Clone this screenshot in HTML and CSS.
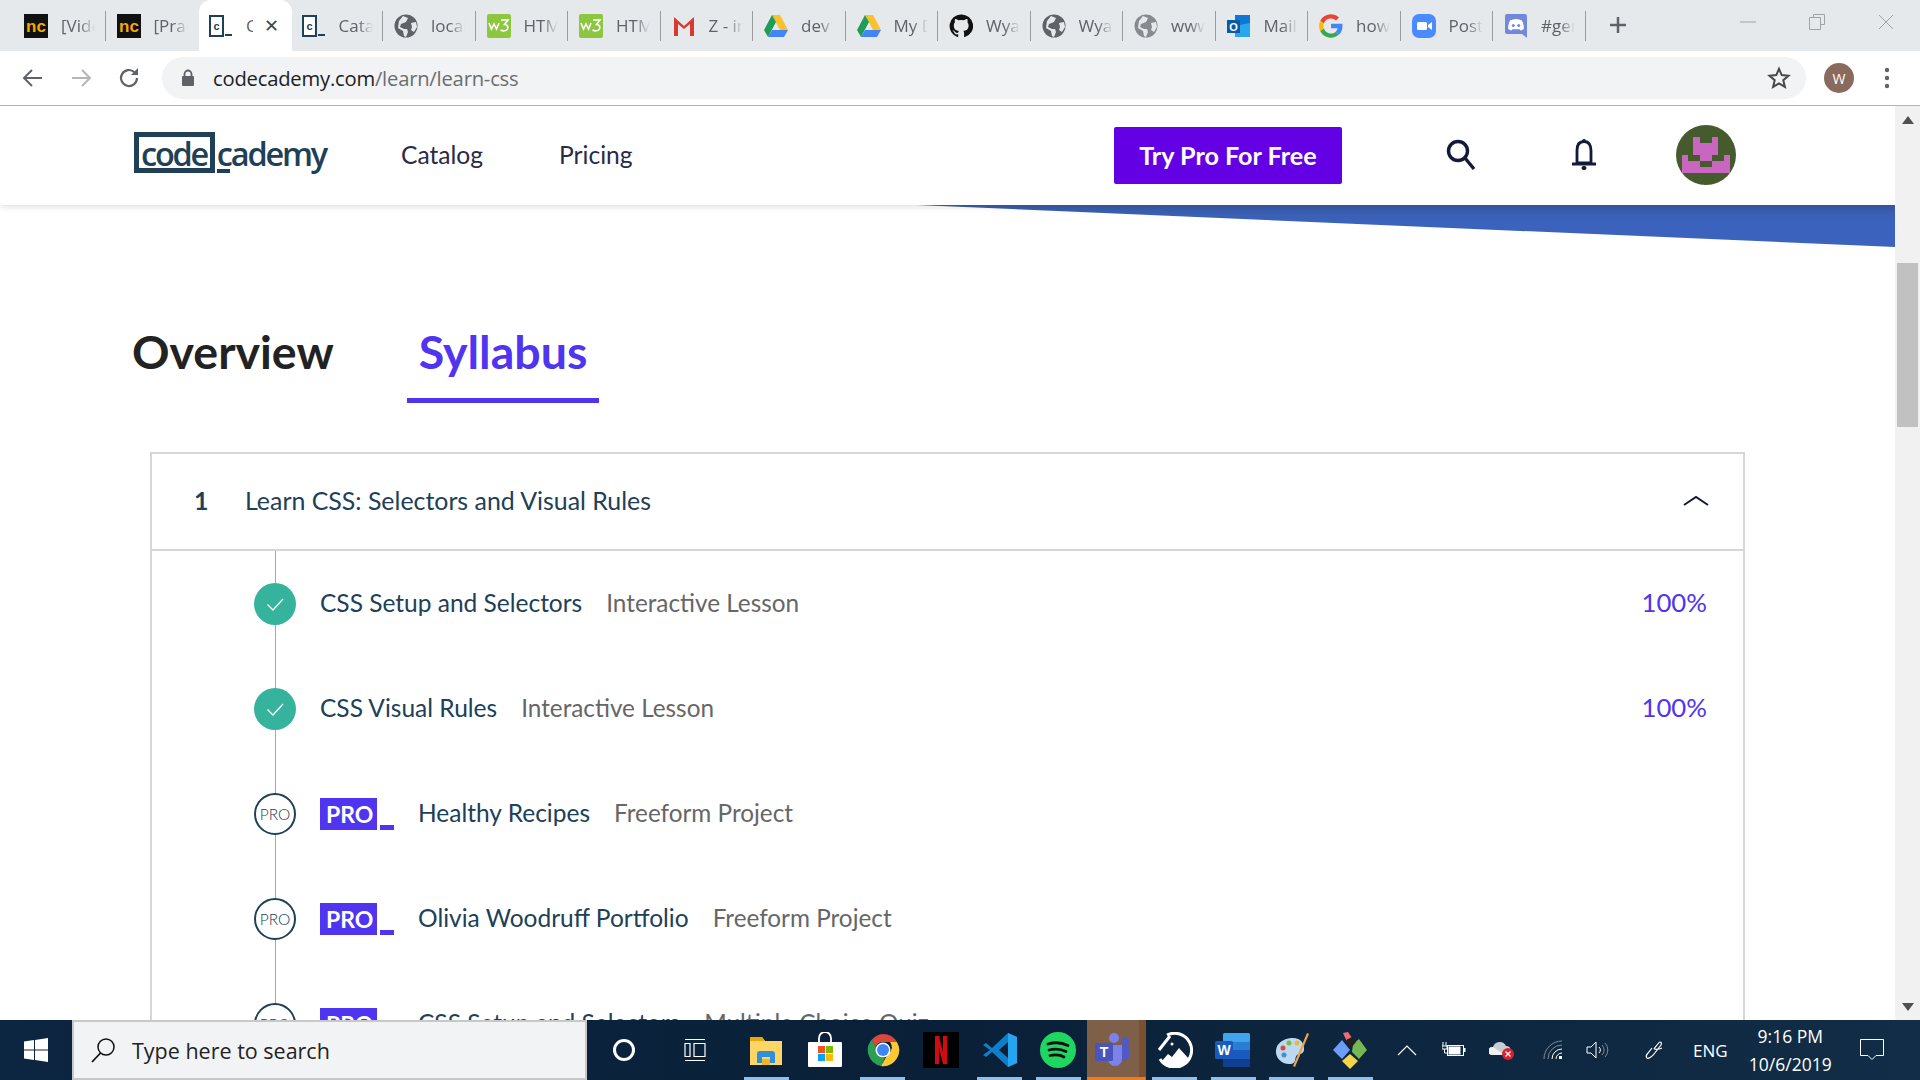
FILE: index.html

```html
<!DOCTYPE html>
<html lang="en">
<head>
  <meta charset="UTF-8">
  <title>Learn CSS | Codecademy</title>
  <link rel="stylesheet" href="styles.css">
</head>
<body>

  <svg class="defs" width="0" height="0">
    <symbol id="fav-nc" viewBox="0 0 24 24">
      <rect width="24" height="24" fill="#111"/>
      <text x="12" y="17.500" text-anchor="middle" font-family="Liberation Sans, sans-serif" font-weight="700" font-size="17" fill="#f5a800">nc</text>
    </symbol>
    <symbol id="fav-cc" viewBox="0 0 24 24">
      <rect x="1" y="2" width="13" height="20" fill="#fff" stroke="#204057" stroke-width="2"/>
      <text x="7.500" y="16" text-anchor="middle" font-family="Liberation Sans, sans-serif" font-weight="700" font-size="11" fill="#204057">c</text>
      <rect x="16" y="20" width="7" height="2" fill="#204057"/>
    </symbol>
    <symbol id="fav-globe" viewBox="0 0 24 24">
      <circle cx="12" cy="12" r="11.500" fill="#5f6368"/>
      <path d="M9 2l5 2-2 4-5 2-1 3 4 2 3 0 1 3-2 5-2-1-1-5-5-3 1-7zM17 9l5-1 1 5-3 5-3-2 1-3z" fill="#e6e9ec"/>
    </symbol>
    <symbol id="fav-w3" viewBox="0 0 24 24">
      <rect width="24" height="24" rx="2" fill="#8dc63f"/>
      <path d="M2 9l2.500 6 2.500-5 2.500 5 2.500-6M14 6h7l-3.500 4.500c3 0 4 2.500 3 4.500s-4.500 2.500-7 1" fill="none" stroke="#fff" stroke-width="1.600"/>
    </symbol>
    <symbol id="fav-gmail" viewBox="0 0 24 24">
      <path d="M2 3l10 9 10-9v19h-4V10l-6 5-6-5v12H2z" fill="#d93a2f"/>
    </symbol>
    <symbol id="fav-drive" viewBox="0 0 24 24">
      <path d="M8 1h8l8 15h-8z" fill="#fbc02d"/>
      <path d="M8 1L0 16l4 7 8-15z" fill="#1f9d55"/>
      <path d="M4 23h16l4-7H8z" fill="#4285f4"/>
    </symbol>
    <symbol id="fav-github" viewBox="0 0 24 24">
      <path d="M12 .5a11.500 11.500 0 0 0-3.600 22.400c.6.100.8-.2.800-.6v-2c-3.200.7-3.900-1.500-3.900-1.500-.5-1.300-1.300-1.700-1.300-1.700-1-.7.100-.7.100-.7 1.200.1 1.800 1.200 1.800 1.200 1 1.800 2.700 1.300 3.300 1 .1-.8.400-1.300.8-1.600-2.600-.3-5.200-1.300-5.200-5.700 0-1.300.4-2.300 1.200-3.100-.1-.3-.5-1.500.1-3.100 0 0 1-.3 3.200 1.200a11 11 0 0 1 5.800 0c2.200-1.500 3.200-1.200 3.200-1.200.6 1.600.2 2.800.1 3.100.8.800 1.200 1.900 1.200 3.100 0 4.400-2.700 5.400-5.300 5.700.4.400.8 1.100.8 2.200v3.200c0 .3.200.7.800.6A11.500 11.500 0 0 0 12 .5z" fill="#111"/>
    </symbol>
    <symbol id="fav-outlook" viewBox="0 0 24 24">
      <rect x="8" y="1" width="15" height="22" fill="#0f78d4"/>
      <path d="M8 12l15-3v14H8z" fill="#28a8ea"/>
      <rect x="0" y="6" width="13" height="13" fill="#0a5aa8"/>
      <text x="6.500" y="16.500" text-anchor="middle" font-family="Liberation Sans, sans-serif" font-weight="700" font-size="11" fill="#fff">O</text>
    </symbol>
    <symbol id="fav-google" viewBox="0 0 24 24">
      <path d="M12 4.500a7.500 7.500 0 0 1 5 1.900l3-3A12 12 0 0 0 1.300 6.700l3.500 2.700A7.500 7.500 0 0 1 12 4.500z" fill="#ea4335"/>
      <path d="M1.300 6.700a12 12 0 0 0 0 10.600l3.500-2.700a7.500 7.500 0 0 1 0-5.200z" fill="#fbbc05"/>
      <path d="M1.300 17.300A12 12 0 0 0 20 20.600l-3.400-2.700A7.500 7.500 0 0 1 4.800 14.600z" fill="#34a853"/>
      <path d="M23.500 12c0-.8-.1-1.500-.2-2.200H12v4.500h6.500a5.600 5.600 0 0 1-1.900 3.600l3.400 2.700c2.200-2 3.500-5 3.500-8.600z" fill="#4285f4"/>
    </symbol>
    <symbol id="fav-zoom" viewBox="0 0 24 24">
      <rect width="24" height="24" rx="7" fill="#4a8cff"/>
      <rect x="5" y="8" width="10" height="8" rx="1.500" fill="#fff"/>
      <path d="M16 11l4-3v8l-4-3z" fill="#fff"/>
    </symbol>
    <symbol id="fav-discord" viewBox="0 0 24 24">
      <path d="M3 0h18a2 2 0 0 1 2 2v22l-5-4H3a2 2 0 0 1-2-2V2a2 2 0 0 1 2-2z" fill="#7289da"/>
      <path d="M6 6.500c4-2 8-2 12 0 1.500 3 2 6 1.800 8.500-1 .7-2 1.200-3.300 1.500l-.8-1.300H8.300l-.8 1.300C6.200 16.200 5.200 15.700 4.200 15c-.2-2.500.3-5.500 1.800-8.500z" fill="#fff"/>
      <circle cx="9.300" cy="11.500" r="1.500" fill="#7289da"/>
      <circle cx="14.700" cy="11.500" r="1.500" fill="#7289da"/>
    </symbol>
    <symbol id="i-check" viewBox="0 0 42 42">
      <path d="M13.500 21.500l5.500 5.500 10-11" fill="none" stroke="#fff" stroke-width="1.300"/>
    </symbol>
  </svg>

  <div class="tabstrip">
    <div class="tab"><svg class="fav"><use href="#fav-nc"/></svg><span class="tab-title">[Video] How</span></div>
    <div class="tab"><svg class="fav"><use href="#fav-nc"/></svg><span class="tab-title">[Practice] Le</span></div>
    <div class="tab active"><svg class="fav"><use href="#fav-cc"/></svg><span class="tab-title">Codecademy</span><span class="tab-close">&#10005;</span></div>
    <div class="tab"><svg class="fav"><use href="#fav-cc"/></svg><span class="tab-title">Catalog</span></div>
    <div class="tab"><svg class="fav"><use href="#fav-globe"/></svg><span class="tab-title">localhost</span></div>
    <div class="tab"><svg class="fav"><use href="#fav-w3"/></svg><span class="tab-title">HTML</span></div>
    <div class="tab"><svg class="fav"><use href="#fav-w3"/></svg><span class="tab-title">HTML</span></div>
    <div class="tab"><svg class="fav"><use href="#fav-gmail"/></svg><span class="tab-title">Z - inbox</span></div>
    <div class="tab"><svg class="fav"><use href="#fav-drive"/></svg><span class="tab-title">dev</span></div>
    <div class="tab"><svg class="fav"><use href="#fav-drive"/></svg><span class="tab-title">My Drive</span></div>
    <div class="tab"><svg class="fav"><use href="#fav-github"/></svg><span class="tab-title">Wyatt</span></div>
    <div class="tab"><svg class="fav"><use href="#fav-globe"/></svg><span class="tab-title">Wyatt</span></div>
    <div class="tab"><svg class="fav dim"><use href="#fav-globe"/></svg><span class="tab-title">www.</span></div>
    <div class="tab"><svg class="fav"><use href="#fav-outlook"/></svg><span class="tab-title">Mail</span></div>
    <div class="tab"><svg class="fav"><use href="#fav-google"/></svg><span class="tab-title">how to</span></div>
    <div class="tab"><svg class="fav"><use href="#fav-zoom"/></svg><span class="tab-title">Post</span></div>
    <div class="tab"><svg class="fav"><use href="#fav-discord"/></svg><span class="tab-title">#general</span></div>
    <svg class="newtab" width="18" height="18" viewBox="0 0 18 18"><path d="M9 1v16M1 9h16" stroke="#5f6368" stroke-width="2.500"/></svg>
    <div class="winctl">
      <svg width="16" height="16" viewBox="0 0 16 16"><path d="M0 8h16" stroke="#a0a3a6"/></svg>
      <svg width="16" height="16" viewBox="0 0 16 16"><path d="M4.500 3V.5h11v10H12M.5 3.500h11v12H.5z" fill="none" stroke="#a0a3a6"/></svg>
      <svg width="16" height="16" viewBox="0 0 16 16"><path d="M1 1l14 14M15 1L1 15" stroke="#a0a3a6"/></svg>
    </div>
  </div>

  <div class="toolbar">
    <svg class="tool" width="24" height="24" viewBox="0 0 24 24"><path d="M21 12H4M11 4l-8 8 8 8" fill="none" stroke="#5f6368" stroke-width="2"/></svg>
    <svg class="tool" width="24" height="24" viewBox="0 0 24 24"><path d="M3 12h17M13 4l8 8-8 8" fill="none" stroke="#b4b6b8" stroke-width="2"/></svg>
    <svg class="tool" width="24" height="24" viewBox="0 0 24 24"><path d="M20 12a8 8 0 1 1-2.500-5.800" fill="none" stroke="#5f6368" stroke-width="2.200"/><path d="M21 2v7h-7z" fill="#5f6368"/></svg>
    <div class="omnibox">
      <svg class="lock" width="14" height="18" viewBox="0 0 14 18"><path d="M3.500 8V5a3.500 3.500 0 0 1 7 0v3" fill="none" stroke="#5f6368" stroke-width="1.800"/><rect x="1" y="7" width="12" height="10" rx="1" fill="#5f6368"/></svg>
      <span class="url"><span class="url-host">codecademy.com</span>/learn/learn-css</span>
      <svg class="star" width="24" height="24" viewBox="0 0 24 24"><path d="M12 2.800l2.700 6.300 6.800.6-5.200 4.500 1.600 6.700L12 17.300l-5.900 3.600 1.600-6.700-5.200-4.500 6.800-.6z" fill="none" stroke="#46494c" stroke-width="2"/></svg>
    </div>
    <div class="profile">W</div>
    <svg class="menu" width="6" height="22" viewBox="0 0 6 22"><circle cx="3" cy="3" r="2.200" fill="#5f6368"/><circle cx="3" cy="11" r="2.200" fill="#5f6368"/><circle cx="3" cy="19" r="2.200" fill="#5f6368"/></svg>
  </div>

  <div class="viewport">
    <div class="page">
      <header class="sitenav">
        <div class="logo"><span class="logo-box">code</span><span class="logo-rest">cademy</span></div>
        <a class="navlink catalog">Catalog</a>
        <a class="navlink pricing">Pricing</a>
        <a class="trypro">Try Pro For Free</a>
        <svg class="nav-search" width="32" height="32" viewBox="0 0 32 32"><circle cx="13" cy="12" r="9.500" fill="none" stroke="#14193a" stroke-width="3.400"/><path d="M20 19l9 11" stroke="#14193a" stroke-width="3.400"/></svg>
        <svg class="nav-bell" width="26" height="32" viewBox="0 0 26 32"><path d="M13 2.500c-5 0-7 4-7 9V24h14V11.500c0-5-2-9-7-9z" fill="none" stroke="#14193a" stroke-width="2.800"/><path d="M1 25h24" stroke="#14193a" stroke-width="3"/><rect x="11" y="0" width="4" height="4" rx="2" fill="#14193a"/><rect x="10.500" y="27" width="5" height="4" rx="2" fill="#14193a"/></svg>
        <svg class="avatar" width="60" height="60" viewBox="0 0 60 60">
          <circle cx="30" cy="30" r="30" fill="#455a2d"/>
          <path d="M17 12h7v6h12v-6h6v18H17zM6 30h6v6h12v-6h12v6h12v-6h6v18H6zM24 36v6h12v-6z" fill="#c966c0" fill-rule="evenodd"/>
        </svg>
      </header>

      <div class="wedge"></div>

      <div class="pagetabs">
        <div class="pagetab">Overview</div>
        <div class="pagetab current">Syllabus</div>
      </div>

      <section class="module">
        <div class="module-head">
          <span class="module-num">1</span>
          <span class="module-title">Learn CSS: Selectors and Visual Rules</span>
          <svg class="chevron" width="26" height="12" viewBox="0 0 26 12"><path d="M1 10l12-8 12 8" fill="none" stroke="#14193a" stroke-width="2"/></svg>
        </div>
        <div class="lesson">
          <div class="marker"><div class="dot done"><svg width="42" height="42"><use href="#i-check"/></svg></div></div>
          <span class="lesson-name">CSS Setup and Selectors</span>
          <span class="lesson-kind">Interactive Lesson</span>
          <span class="lesson-pct">100%</span>
        </div>
        <div class="lesson">
          <div class="marker"><div class="dot done"><svg width="42" height="42"><use href="#i-check"/></svg></div></div>
          <span class="lesson-name">CSS Visual Rules</span>
          <span class="lesson-kind">Interactive Lesson</span>
          <span class="lesson-pct">100%</span>
        </div>
        <div class="lesson">
          <div class="marker"><div class="dot pro">PRO</div></div>
          <div class="probadge">PRO</div>
          <span class="lesson-name">Healthy Recipes</span>
          <span class="lesson-kind">Freeform Project</span>
        </div>
        <div class="lesson">
          <div class="marker"><div class="dot pro">PRO</div></div>
          <div class="probadge">PRO</div>
          <span class="lesson-name">Olivia Woodruff Portfolio</span>
          <span class="lesson-kind">Freeform Project</span>
        </div>
        <div class="lesson">
          <div class="marker"><div class="dot pro">PRO</div></div>
          <div class="probadge">PRO</div>
          <span class="lesson-name">CSS Setup and Selectors</span>
          <span class="lesson-kind">Multiple Choice Quiz</span>
        </div>
      </section>
    </div>

    <div class="scrollbar">
      <svg width="12" height="8" viewBox="0 0 12 8"><path d="M6 0l6 8H0z" fill="#505050"/></svg>
      <div class="thumb"></div>
      <svg class="scroll-down" width="12" height="8" viewBox="0 0 12 8"><path d="M6 8l6-8H0z" fill="#505050"/></svg>
    </div>
  </div>

  <footer class="taskbar">
    <div class="start">
      <svg width="24" height="24" viewBox="0 0 24 24"><path d="M0 3.500l10-1.400V11.500H0zM11 2l13-2v11.500H11zM0 12.500h10v9.400L0 20.500zM11 12.500h13V24l-13-2z" fill="#fff"/></svg>
    </div>
    <div class="searchbox">
      <svg width="26" height="26" viewBox="0 0 26 26"><circle cx="16" cy="10" r="8" fill="none" stroke="#111" stroke-width="1.500"/><path d="M10.500 16L2 25" stroke="#111" stroke-width="1.800"/></svg>
      <span>Type here to search</span>
    </div>
    <div class="cortana"><svg width="24" height="24" viewBox="0 0 24 24"><circle cx="12" cy="12" r="9.500" fill="none" stroke="#fff" stroke-width="3"/></svg></div>
    <div class="taskview"><svg width="24" height="22" viewBox="0 0 24 22"><path d="M2 .5h20M2 21.500h20M2 4.500h5v13H2zM11 4.500h11v13H11z" fill="none" stroke="#fff" stroke-width="1.200"/></svg></div>

    <div class="app running"><svg width="34" height="34" viewBox="0 0 34 34"><path d="M1 4h12l3 4h17v24H1z" fill="#ffd566"/><path d="M1 4h12l3 4H1z" fill="#e8a80c"/><path d="M8 30v-9a3 3 0 0 1 3-3h12a3 3 0 0 1 3 3v9h-5v-6h-8v6z" fill="#2f8fd8"/><rect x="13" y="26" width="8" height="6" fill="#f0b429"/></svg></div>
    <div class="app"><svg width="36" height="36" viewBox="0 0 36 36"><path d="M12 10V6a6 6 0 0 1 12 0v4" fill="none" stroke="#fff" stroke-width="1.800"/><rect x="1" y="10" width="34" height="25" rx="1" fill="#fff"/><rect x="11" y="14" width="7" height="7" fill="#f25022"/><rect x="19" y="14" width="7" height="7" fill="#7fba00"/><rect x="11" y="22" width="7" height="7" fill="#00a4ef"/><rect x="19" y="22" width="7" height="7" fill="#ffb900"/></svg></div>
    <div class="app running"><svg width="34" height="34" viewBox="0 0 34 34"><path d="M17 1a16 16 0 0 1 13.900 8H17a8 8 0 0 0-7.400 5L5.700 6.800A16 16 0 0 1 17 1z" fill="#d9483b"/><path d="M5.700 6.800L12 18a6 6 0 0 0 7 6.700L15 33A16 16 0 0 1 5.700 6.800z" fill="#2e9e55"/><path d="M30.900 9A16 16 0 0 1 15 33l6.900-12A8 8 0 0 0 24 9z" fill="#fcc934"/><circle cx="17" cy="17" r="7.500" fill="#fff"/><circle cx="17" cy="17" r="6" fill="#4285f4"/></svg></div>
    <div class="app"><svg width="36" height="36" viewBox="0 0 36 36"><rect width="36" height="36" fill="#000"/><path d="M12 4h4l4 16V4h4v28h-4l-4-16v16h-4z" fill="#d20a12"/></svg></div>
    <div class="app running"><svg width="36" height="36" viewBox="0 0 36 36"><path d="M26 1l9 4v26l-9 4L10 20l-6 5-3-2 7-5-7-5 3-2 6 5z" fill="#0f7fcb"/><path d="M26 1l9 4v26l-9 4z" fill="#25a5ef"/><path d="M26 10l-9 8 9 8z" fill="#0b2138"/></svg></div>
    <div class="app running"><svg width="36" height="36" viewBox="0 0 36 36"><circle cx="18" cy="18" r="18" fill="#1ed760"/><path d="M8 12c7-2 14-1.500 20 1.500M9 18c6-1.500 12-1 17 1.500M10 23.500c5-1 10-1 14 1.500" fill="none" stroke="#111" stroke-width="2.800" stroke-linecap="round"/></svg></div>
    <div class="app teams"><svg width="36" height="36" viewBox="0 0 36 36"><circle cx="20" cy="6" r="5" fill="#7b83eb"/><circle cx="31" cy="9" r="4" fill="#5059c9"/><path d="M14 13h14v14a7 7 0 0 1-14 0z" fill="#7b83eb"/><path d="M28 13h7v11a5 5 0 0 1-7 4z" fill="#5059c9"/><rect x="1" y="11" width="18" height="18" rx="1.500" fill="#4b53bc"/><text x="10" y="25" text-anchor="middle" font-family="Liberation Sans, sans-serif" font-weight="700" font-size="14" fill="#fff">T</text></svg></div>
    <div class="app running"><svg width="36" height="36" viewBox="0 0 36 36"><path d="M10 3a17 17 0 1 1-7 24" fill="none" stroke="#fff" stroke-width="3"/><path d="M13 4L2 18" stroke="#fff" stroke-width="3"/><circle cx="15" cy="12" r="1.500" fill="#fff"/><path d="M5 29l6-7 4 3 7-9 11 12c-6 9-21 10-28 1z" fill="#fff"/></svg></div>
    <div class="app running"><svg width="36" height="36" viewBox="0 0 36 36"><rect x="8" y="1" width="27" height="34" rx="2" fill="#2b7cd3"/><rect x="8" y="1" width="27" height="9" rx="2" fill="#41a5ee"/><rect x="8" y="18" width="27" height="9" fill="#185abd"/><rect x="8" y="27" width="27" height="8" fill="#103f91"/><rect x="0" y="9" width="18" height="18" rx="1.500" fill="#185abd"/><text x="9" y="23" text-anchor="middle" font-family="Liberation Sans, sans-serif" font-weight="700" font-size="14" fill="#fff">W</text></svg></div>
    <div class="app running"><svg width="36" height="36" viewBox="0 0 36 36"><path d="M17 6c9-1 14 5 13 12-1 5-4 3-7 5-3 3 0 8-6 9C8 33 1 26 2 18 3 11 9 7 17 6z" fill="#bcd9ef"/><circle cx="9" cy="16" r="2.500" fill="#d9483b"/><circle cx="15" cy="11" r="2.500" fill="#7dbb42"/><circle cx="23" cy="11" r="2.500" fill="#f2b33d"/><circle cx="10" cy="23" r="2.500" fill="#3f8fd8"/><path d="M33 1l2 1-14 33-2-1z" fill="#e8a34f"/></svg></div>
    <div class="app running"><svg width="36" height="38" viewBox="0 0 36 38"><path d="M11 2l5-1 4 6-5 4z" fill="#ef6b73"/><path d="M27 8l8 11-8 9-7-7 1-8z" fill="#76b852"/><path d="M10 9l8 10-8 9-9-9z" fill="#6c9ef8"/><path d="M18 23l8 7-8 8-8-8z" fill="#f5d547"/><path d="M14 9l6-3 4 5-6 7z" fill="#222"/></svg></div>

    <div class="tray">
      <div class="tray-item w56"><svg width="20" height="12" viewBox="0 0 20 12"><path d="M1 11l9-9 9 9" fill="none" stroke="#fff" stroke-width="1.200"/></svg></div>
      <div class="tray-item w38"><svg width="24" height="16" viewBox="0 0 24 16"><path d="M1 0v4M4 0v4M0 4h5v3H0zM2.500 7v4h3" fill="none" stroke="#fff"/><rect x="5.500" y="3.500" width="16" height="10" fill="none" stroke="#fff"/><rect x="6.500" y="4.500" width="12" height="8" fill="#fff"/><rect x="22" y="6" width="1.500" height="4" fill="#fff"/></svg></div>
      <div class="tray-item w58"><svg width="26" height="20" viewBox="0 0 26 20"><path d="M3 15a4 4 0 0 1 1-8 7 7 0 0 1 13-1 5 5 0 0 1 3 9z" fill="#c9ced3"/><path d="M3 15a4 4 0 0 1 1-8l12 8z" fill="#eef0f2"/><circle cx="19" cy="14" r="6" fill="#d8232f"/><path d="M16.500 11.500l5 5M21.500 11.500l-5 5" stroke="#fff" stroke-width="1.200"/></svg></div>
      <div class="tray-item w44"><svg width="20" height="20" viewBox="0 0 20 20"><path d="M1 19A18 18 0 0 1 19 1M5 19A14 14 0 0 1 19 5" fill="none" stroke="#7e8a96"/><path d="M9 19a10 10 0 0 1 10-10M13 19a6 6 0 0 1 6-6" fill="none" stroke="#fff"/><rect x="16" y="16" width="3" height="3" fill="#fff"/></svg></div>
      <div class="tray-item w46"><svg width="24" height="18" viewBox="0 0 24 18"><path d="M1 6h4l5-5v16l-5-5H1z" fill="none" stroke="#fff"/><path d="M13 6a4 4 0 0 1 0 6" fill="none" stroke="#fff"/><path d="M16 4a7 7 0 0 1 0 10M19 2a10 10 0 0 1 0 14" fill="none" stroke="#7e8a96"/></svg></div>
      <div class="tray-item w64"><svg width="22" height="20" viewBox="0 0 22 20"><path d="M12 9c3-4 5-7 6-7s2 1 1 3l-7 9c-2 3-6 5-7 4s-1-3 1-5l4-5M12 9c3 1 6 0 8-1" fill="none" stroke="#fff" stroke-width="1.200"/></svg></div>
      <div class="tray-item w50 lang">ENG</div>
      <div class="clock"><span>9:16 PM</span><span>10/6/2019</span></div>
      <div class="tray-item w54"><svg width="24" height="22" viewBox="0 0 24 22"><path d="M.5.500h23v16H16l-4 4-4-4H.5z" fill="none" stroke="#fff"/></svg></div>
    </div>
  </footer>

</body>
</html>
```

FILE: styles.css

```css
* { box-sizing: border-box; }
html, body { margin: 0; height: 100%; }
body { width: 1920px; height: 1080px; display: flex; flex-direction: column; overflow: hidden; font-family: "Lato", sans-serif; background: #fff; }
.defs { display: none; }
a { cursor: pointer; }

/* browser chrome */
.tabstrip { height: 51px; background: #e6e9ec; display: flex; padding-left: 14px; align-items: flex-start; flex: none; }
.tab { width: 92.5px; height: 51px; display: flex; align-items: center; padding-left: 10px; flex: none; position: relative; }
.tab::after { content: ""; position: absolute; right: 1px; top: 11px; height: 30px; width: 1px; background: #9a9da0; }
.tab:nth-child(2)::after, .tab:nth-child(3)::after { display: none; }
.fav { width: 24px; height: 24px; flex: none; }
.fav.dim { opacity: .7; }
.tab-title { margin-left: 13px; width: 34px; overflow: hidden; white-space: nowrap; font-family: "Open Sans", sans-serif; font-size: 17px; color: #5f6368; -webkit-mask-image: linear-gradient(90deg, #000 55%, transparent); mask-image: linear-gradient(90deg, #000 55%, transparent); }
.tab.active { background: #fff; border-radius: 12px 12px 0 0; }
.tab.active .tab-title { width: 7px; margin-left: 13px; -webkit-mask-image: none; mask-image: none; }
.tab-close { margin-left: 11px; font-size: 18px; line-height: 20px; color: #45484b; font-family: "DejaVu Sans", sans-serif; }
.newtab { margin: 16px 0 0 22px; flex: none; }
.winctl { margin-left: auto; display: flex; gap: 53px; padding: 14px 26px 0 0; }

.toolbar { height: 55px; background: #fff; border-bottom: 1px solid #b4b4b4; display: flex; align-items: center; flex: none; padding-left: 21px; }
.tool { margin-right: 24px; flex: none; }
.omnibox { margin-left: -3px; width: 1644px; height: 42px; border-radius: 21px; background: #f1f3f4; display: flex; align-items: center; padding: 0 15px 0 19px; flex: none; }
.lock { flex: none; }
.url { margin-left: 18px; font-family: "Open Sans", sans-serif; font-size: 20.2px; color: #6a6e72; letter-spacing: -.2px; }
.url-host { color: #202124; }
.star { margin-left: auto; }
.profile { margin-left: 18px; width: 30px; height: 30px; border-radius: 50%; background: #8a6a5c; color: #fff; font-family: "Open Sans", sans-serif; font-size: 14px; display: flex; align-items: center; justify-content: center; flex: none; }
.menu { margin-left: 30px; flex: none; }

/* site */
.viewport { flex: 1; display: flex; min-height: 0; }
.page { flex: 1; min-width: 0; overflow: hidden; }
.sitenav { height: 99px; display: flex; align-items: center; padding: 0 159px 0 134px; background: #fff; box-shadow: 0 2px 6px rgba(0,0,0,.12); position: relative; z-index: 2; }
.logo { display: flex; align-items: flex-start; margin-bottom: 6px; font-family: "Open Sans", sans-serif; font-weight: 600; font-size: 32.5px; color: #204057; letter-spacing: -2.2px; line-height: 33px; width: 192px; }
.logo-box { width: 81px; height: 41px; border: 5px solid #204057; padding-left: 2px; display: block; }
.logo-rest { margin-left: 2px; padding-top: 5px; height: 41px; background: linear-gradient(#204057, #204057) left bottom / 13px 4px no-repeat; }
.navlink { font-size: 24.6px; color: #2a2a46; padding-bottom: 2px; }
.catalog { margin-left: 75px; }
.pricing { margin-left: 76px; }
.trypro { margin-left: auto; width: 228px; height: 57px; border-radius: 2px; background: #6400e4; color: #fff; font-weight: 700; font-size: 25.2px; padding-bottom: 2px; display: flex; align-items: center; justify-content: center; }
.nav-search { margin: 0 0 2px 103px; flex: none; }
.nav-bell { margin: 0 0 2px 94px; flex: none; }
.avatar { margin: 0 0 1px 79px; flex: none; }

.wedge { height: 42px; background: linear-gradient(#385ba8, #3b63bd 40%); clip-path: polygon(48.4% 0, 100% 0, 100% 100%); }

.pagetabs { display: flex; gap: 61px; margin: 59px 0 0 120px; }
.pagetab { padding: 0 12px; height: 97px; font-weight: 700; font-size: 46.5px; line-height: 91px; color: #222; border-bottom: 5px solid transparent; }
.pagetab.current { color: #4f35ef; border-bottom-color: #4f35ef; }

.module { margin: 49px 0 0 150px; width: 1595px; border: 2px solid #d6d6d6; border-bottom: 0; }
.module-head { height: 97px; border-bottom: 2px solid #d6d6d6; display: flex; align-items: center; padding: 0 34px 0 42px; color: #204057; font-size: 24.9px; }
.module-num { width: 51px; font-weight: 700; padding-bottom: 3px; }
.module-title { padding-bottom: 3px; }
.chevron { margin: 0 0 2px auto; }
.lesson { height: 105px; display: flex; align-items: center; padding: 0 36px 0 102px; font-size: 24.5px; }
.marker { width: 42px; height: 105px; flex: none; display: flex; align-items: center; background: linear-gradient(#a8a8a8, #a8a8a8) center / 1px 100% no-repeat; margin-right: 24px; }
.dot { width: 42px; height: 42px; border-radius: 50%; display: flex; align-items: center; justify-content: center; flex: none; }
.dot.done { background: #35b39d; }
.dot.pro { background: #fff; border: 2px solid #204057; color: #204057; font-size: 15.5px; font-weight: 300; }
.probadge { width: 74px; height: 32px; flex: none; margin-right: 24px; color: #fff; font-weight: 700; font-size: 23px; line-height: 32px; padding-left: 6px; background: linear-gradient(#4f35ef, #4f35ef) left / 57px 100% no-repeat, linear-gradient(#4f35ef, #4f35ef) right bottom / 14px 5px no-repeat; }
.lesson-name { color: #204057; padding-bottom: 2px; }
.lesson-kind { margin-left: 24px; color: #666; font-size: 24.3px; padding-bottom: 2px; }
.lesson-pct { margin-left: auto; color: #4f35ef; font-size: 25.8px; padding-bottom: 3px; }

.scrollbar { width: 25px; background: #f1f1f1; display: flex; flex-direction: column; align-items: center; padding-top: 10px; flex: none; }
.thumb { margin-top: 139px; width: 21px; height: 164px; background: #c1c1c1; }
.scroll-down { margin-top: auto; margin-bottom: 9px; }

/* windows taskbar */
.taskbar { height: 60px; flex: none; display: flex; align-items: center; background: linear-gradient(90deg, #0c2541, #0a2038 50%, #122d47); }
.start { width: 72px; display: flex; justify-content: center; }
.searchbox { width: 515px; height: 60px; background: #f2f3f5; border: 2px solid #c8c8c8; display: flex; align-items: center; padding-left: 16px; font-family: "Open Sans", sans-serif; font-size: 21.5px; color: #222; }
.searchbox span { margin-left: 16px; }
.cortana { width: 73px; display: flex; justify-content: center; }
.taskview { width: 62px; margin-right: 15px; padding-left: 8px; display: flex; justify-content: center; }
.app { width: 58.4px; height: 60px; display: flex; align-items: center; justify-content: center; flex: none; }
.app.running { background: linear-gradient(#8fc0ec, #8fc0ec) center bottom / 45px 3px no-repeat; }
.app.teams { background: linear-gradient(#f27a12, #f27a12) bottom / 100% 3px no-repeat, linear-gradient(#7a5030, #7a5030) right / 7px 100% no-repeat, #7e5f48; padding-right: 10px; }
.tray { display: flex; align-items: center; height: 60px; color: #fff; }
.tray-item { display: flex; align-items: center; justify-content: center; flex: none; }
.w56 { width: 56px; } .w38 { width: 38px; } .w58 { width: 58px; } .w44 { width: 44px; }
.w46 { width: 46px; } .w64 { width: 64px; } .w50 { width: 50px; } .w54 { width: 54px; }
.lang { font-family: "Open Sans", sans-serif; font-size: 17px; }
.clock { width: 110px; display: flex; flex-direction: column; align-items: center; gap: 5px; font-family: "Open Sans", sans-serif; font-size: 17.5px; line-height: 23px; }
```
